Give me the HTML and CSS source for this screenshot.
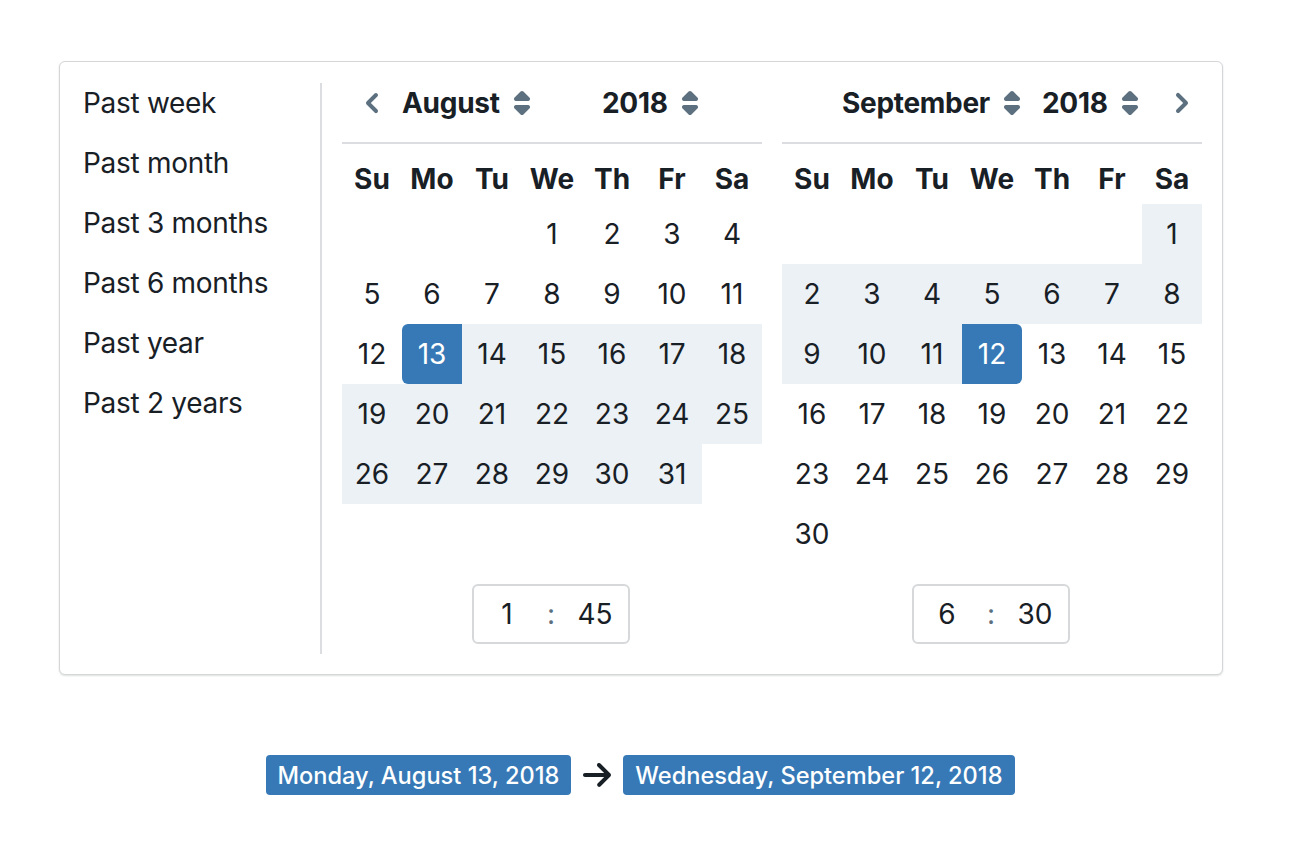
FILE: index.html
```html
<!DOCTYPE html>
<html lang="en">
<head>
<meta charset="utf-8">
<title>Date range picker</title>
<link rel="stylesheet" href="styles.css">
</head>
<body>
<div class="page">
  <div class="popover">
    <ul class="menu">
      <li class="menu-item">Past week</li>
      <li class="menu-item">Past month</li>
      <li class="menu-item">Past 3 months</li>
      <li class="menu-item">Past 6 months</li>
      <li class="menu-item">Past year</li>
      <li class="menu-item">Past 2 years</li>
    </ul>
    <div class="divider"></div>
    <div class="calendars">
      <div class="cal">
        <div class="caption">
          <span class="nav nav-prev"><svg width="32" height="32" viewBox="0 0 16 16"><path fill="#5c7080" d="M7.41 8l3.29-3.29c.19-.18.3-.43.3-.71a1.003 1.003 0 00-1.710-.71l-4 4C5.11 7.47 5 7.72 5 8c0 .28.11.53.29.71l4 4a1.003 1.003 0 001.42-1.42L7.41 8z"/></svg></span>
          <span class="sel month">August<svg class="caret" width="16" height="24" viewBox="4 2 8 12"><path fill="#5c7080" d="M5 7h6a1.003 1.003 0 00.71-1.71l-3-3C8.530 2.11 8.28 2 8 2s-.53.11-.71.29l-3 3A1.003 1.003 0 005 7zm6 2H5a1.003 1.003 0 00-.71 1.71l3 3c.18.18.43.29.71.29s.53-.11.71-.29l3-3A1.003 1.003 0 0011 9z"/></svg></span>
          <span class="sel year">2018<svg class="caret" width="16" height="24" viewBox="4 2 8 12"><path fill="#5c7080" d="M5 7h6a1.003 1.003 0 00.71-1.71l-3-3C8.530 2.11 8.28 2 8 2s-.53.11-.71.29l-3 3A1.003 1.003 0 005 7zm6 2H5a1.003 1.003 0 00-.71 1.71l3 3c.18.18.43.29.71.29s.53-.11.71-.29l3-3A1.003 1.003 0 0011 9z"/></svg></span>
          <span class="spacer"></span>
        </div>
        <div class="weekdays">
          <div>Su</div><div>Mo</div><div>Tu</div><div>We</div><div>Th</div><div>Fr</div><div>Sa</div>
        </div>
        <div class="days">
          <div class="day empty"></div><div class="day empty"></div><div class="day empty"></div><div class="day">1</div><div class="day">2</div><div class="day">3</div><div class="day">4</div>
          <div class="day">5</div><div class="day">6</div><div class="day">7</div><div class="day">8</div><div class="day">9</div><div class="day">10</div><div class="day">11</div>
          <div class="day">12</div><div class="day selected start">13</div><div class="day in-range">14</div><div class="day in-range">15</div><div class="day in-range">16</div><div class="day in-range">17</div><div class="day in-range">18</div>
          <div class="day in-range">19</div><div class="day in-range">20</div><div class="day in-range">21</div><div class="day in-range">22</div><div class="day in-range">23</div><div class="day in-range">24</div><div class="day in-range">25</div>
          <div class="day in-range">26</div><div class="day in-range">27</div><div class="day in-range">28</div><div class="day in-range">29</div><div class="day in-range">30</div><div class="day in-range">31</div><div class="day empty"></div>
        </div>
        <div class="time-row">
          <div class="timepicker">
            <span class="tp-field">1</span><span class="tp-colon">:</span><span class="tp-field">45</span>
          </div>
        </div>
      </div>
      <div class="cal">
        <div class="caption">
          <span class="nav nav-blank"></span>
          <span class="sel month">September<svg class="caret" width="16" height="24" viewBox="4 2 8 12"><path fill="#5c7080" d="M5 7h6a1.003 1.003 0 00.71-1.71l-3-3C8.530 2.11 8.28 2 8 2s-.53.11-.71.29l-3 3A1.003 1.003 0 005 7zm6 2H5a1.003 1.003 0 00-.71 1.71l3 3c.18.18.43.29.71.29s.53-.11.71-.29l3-3A1.003 1.003 0 0011 9z"/></svg></span>
          <span class="sel year">2018<svg class="caret" width="16" height="24" viewBox="4 2 8 12"><path fill="#5c7080" d="M5 7h6a1.003 1.003 0 00.71-1.71l-3-3C8.530 2.11 8.28 2 8 2s-.53.11-.71.29l-3 3A1.003 1.003 0 005 7zm6 2H5a1.003 1.003 0 00-.71 1.71l3 3c.18.18.43.29.71.29s.53-.11.71-.29l3-3A1.003 1.003 0 0011 9z"/></svg></span>
          <span class="spacer"></span>
          <span class="nav nav-next"><svg width="32" height="32" viewBox="0 0 16 16"><path fill="#5c7080" d="M10.71 7.29l-4-4a1.003 1.003 0 00-1.42 1.42L8.59 8 5.3 11.29c-.19.18-.3.43-.3.71a1.003 1.003 0 001.71.71l4-4c.18-.18.29-.43.29-.71 0-.28-.11-.53-.29-.71z"/></svg></span>
        </div>
        <div class="weekdays">
          <div>Su</div><div>Mo</div><div>Tu</div><div>We</div><div>Th</div><div>Fr</div><div>Sa</div>
        </div>
        <div class="days">
          <div class="day empty"></div><div class="day empty"></div><div class="day empty"></div><div class="day empty"></div><div class="day empty"></div><div class="day empty"></div><div class="day in-range">1</div>
          <div class="day in-range">2</div><div class="day in-range">3</div><div class="day in-range">4</div><div class="day in-range">5</div><div class="day in-range">6</div><div class="day in-range">7</div><div class="day in-range">8</div>
          <div class="day in-range">9</div><div class="day in-range">10</div><div class="day in-range">11</div><div class="day selected end">12</div><div class="day">13</div><div class="day">14</div><div class="day">15</div>
          <div class="day">16</div><div class="day">17</div><div class="day">18</div><div class="day">19</div><div class="day">20</div><div class="day">21</div><div class="day">22</div>
          <div class="day">23</div><div class="day">24</div><div class="day">25</div><div class="day">26</div><div class="day">27</div><div class="day">28</div><div class="day">29</div>
          <div class="day">30</div>
        </div>
        <div class="time-row">
          <div class="timepicker">
            <span class="tp-field">6</span><span class="tp-colon">:</span><span class="tp-field">30</span>
          </div>
        </div>
      </div>
    </div>
  </div>
  <div class="range-summary">
    <span class="tag">Monday, August 13, 2018</span>
    <svg class="arrow" width="28" height="24" viewBox="1 2 14 12"><path fill="#182026" d="M14.7 7.29l-5-5a.965.965 0 00-.71-.3 1.003 1.003 0 00-.71 1.71l3.3 3.3H2c-.55 0-1 .45-1 1s.45 1 1 1h9.59l-3.29 3.29A1.003 1.003 0 009.7 13.7l5-5c.18-.18.29-.43.29-.7s-.11-.53-.29-.71z"/></svg>
    <span class="tag">Wednesday, September 12, 2018</span>
  </div>
</div>
</body>
</html>
```

FILE: styles.css
```css
* { box-sizing: border-box; }

html, body {
  margin: 0;
  padding: 0;
  background: #ffffff;
}

body {
  font-family: Inter, "Noto Sans", "Liberation Sans", sans-serif;
  color: #182026;
  font-size: 28px;
}

.page {
  width: 1164px;
  margin: 61px 0 0 59px;
}

.popover {
  display: flex;
  width: 1164px;
  border: 1px solid #d4d6d8;
  border-radius: 6px;
  box-shadow: 0 1px 2px rgba(16, 22, 26, 0.14);
  padding: 11px 10px 10px 10px;
  background: #fff;
}

.menu {
  list-style: none;
  margin: 0;
  padding: 0;
  width: 250px;
  flex: none;
  letter-spacing: -0.3px;
}

.menu-item {
  height: 60px;
  line-height: 60px;
  padding-left: 13px;
  white-space: nowrap;
}

.divider {
  width: 2px;
  flex: none;
  background: #dcdde0;
  margin: 10px 0;
}

.calendars {
  display: flex;
  gap: 20px;
  padding-left: 20px;
  padding-right: 10px;
}

.cal {
  width: 420px;
  flex: none;
}

.caption {
  display: flex;
  align-items: center;
  height: 71px;
  padding-bottom: 10px;
  padding-top: 1px;
  border-bottom: 2px solid #dcdde0;
  font-weight: 700;
  letter-spacing: -0.3px;
}

.nav {
  display: flex;
  align-items: center;
  justify-content: center;
  flex: none;
  height: 60px;
}

.nav-prev, .nav-blank { width: 60px; }
.nav-next { width: 40px; }

.sel {
  display: flex;
  align-items: center;
  flex: none;
  height: 60px;
  white-space: nowrap;
}

.month { width: 200px; }
.year { width: 120px; }

.caret {
  margin-left: 14px;
  flex: none;
}

.spacer { flex: 1; }

.weekdays {
  display: grid;
  grid-template-columns: repeat(7, 60px);
  height: 60px;
  font-weight: 700;
}

.weekdays div {
  display: flex;
  align-items: center;
  justify-content: center;
  padding-top: 9px;
}

.days {
  display: grid;
  grid-template-columns: repeat(7, 60px);
  grid-auto-rows: 60px;
  height: 360px;
  align-content: start;
}

.day {
  display: flex;
  align-items: center;
  justify-content: center;
}

.day.in-range {
  background: #ebf1f5;
}

.day.selected {
  background: #3679b6;
  color: #fff;
}

.day.start { border-radius: 6px 0 0 6px; }
.day.end { border-radius: 0 6px 6px 0; }

.time-row {
  display: flex;
  justify-content: center;
  margin-top: 20px;
  margin-bottom: 20px;
  padding-right: 2px;
}

.timepicker {
  display: flex;
  align-items: center;
  height: 60px;
  border: 2px solid #d6d8da;
  border-radius: 6px;
}

.tp-field {
  width: 66px;
  text-align: center;
}

.tp-colon {
  width: 22px;
  text-align: center;
  color: #5c7080;
}

.range-summary {
  display: flex;
  justify-content: center;
  align-items: center;
  gap: 12px;
  margin-top: 80px;
  padding-right: 2px;
}

.tag {
  display: inline-flex;
  align-items: center;
  height: 40px;
  padding: 0 12px;
  background: #3679b6;
  color: #fff;
  border-radius: 4px;
  font-size: 23.6px;
  font-weight: 500;
  white-space: nowrap;
}

.arrow { flex: none; }
```
